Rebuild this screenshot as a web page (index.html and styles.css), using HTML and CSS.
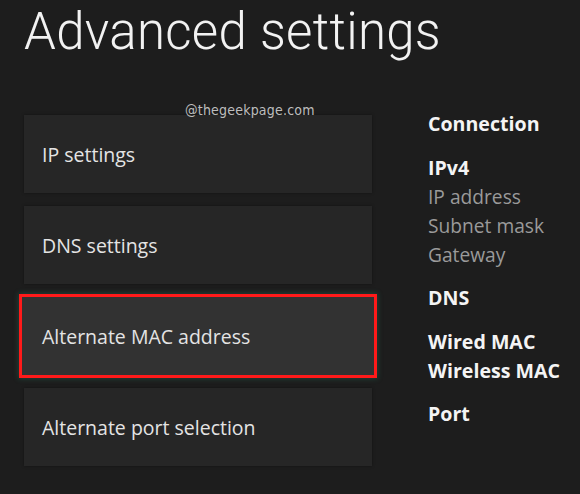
FILE: index.html
```html
<!DOCTYPE html>
<html>
<head>
<meta charset="utf-8">
<link rel="stylesheet" href="styles.css">
</head>
<body>
<div class="page">
  <h1 class="title">Advanced settings</h1>
  <div class="watermark">@thegeekpage.com</div>
  <div class="main">
    <div class="menu">
      <div class="card"><span>IP settings</span></div>
      <div class="card"><span>DNS settings</span></div>
      <div class="card selected"><span>Alternate MAC address</span></div>
      <div class="card"><span>Alternate port selection</span></div>
    </div>
    <div class="info">
      <div class="group">
        <div class="head">Connection</div>
      </div>
      <div class="group">
        <div class="head">IPv4</div>
        <div class="sub">IP address</div>
        <div class="sub">Subnet mask</div>
        <div class="sub">Gateway</div>
      </div>
      <div class="group">
        <div class="head">DNS</div>
      </div>
      <div class="group">
        <div class="head">Wired MAC</div>
        <div class="head">Wireless MAC</div>
      </div>
      <div class="group">
        <div class="head">Port</div>
      </div>
    </div>
  </div>
</div>
</body>
</html>
```
FILE: styles.css
```css
html, body {
  margin: 0;
  padding: 0;
  background: #1d1d1d;
}
.page {
  position: relative;
  width: 580px;
  height: 494px;
  overflow: hidden;
  font-family: "Open Sans", "Noto Sans", sans-serif;
}
.title {
  margin: 0;
  padding: 2px 0 0 24px;
  font-family: Roboto, "Noto Sans", sans-serif;
  font-weight: 300;
  font-size: 51px;
  line-height: 60px;
  color: #f2f2f2;
  letter-spacing: 0.3px;
}
.watermark {
  position: absolute;
  left: 185px;
  top: 102px;
  font-family: "DejaVu Sans Condensed", "DejaVu Sans", sans-serif;
  font-stretch: condensed;
  font-size: 14px;
  color: #bdbdbd;
  letter-spacing: 0.2px;
}
.main {
  display: flex;
  margin-top: 53px;
}
.menu {
  display: flex;
  flex-direction: column;
  gap: 13px;
  margin-left: 24px;
  width: 348px;
}
.card {
  height: 78px;
  background: #262626;
  display: flex;
  align-items: center;
  padding-left: 18px;
  color: #e4e4e4;
  font-size: 19.5px;
  box-shadow: 0 0 3px rgba(0,0,0,0.4);
}
.card.selected {
  background: #323232;
  outline: 3px solid #ff1a1a;
  outline-offset: 0;
  margin: 0 -2px;
  padding-left: 20px;
  box-shadow: 0 0 0 3px #0d3d33, 0 0 5px 4px rgba(40,140,110,0.3);
}
.info {
  margin-left: 56px;
  margin-top: -6px;
  display: flex;
  flex-direction: column;
  gap: 14.5px;
}
.head {
  color: #f4f4f4;
  font-weight: 700;
  font-size: 19.6px;
  line-height: 29px;
}
.sub {
  color: #9a9a9a;
  font-size: 19.2px;
  line-height: 29px;
}
```
